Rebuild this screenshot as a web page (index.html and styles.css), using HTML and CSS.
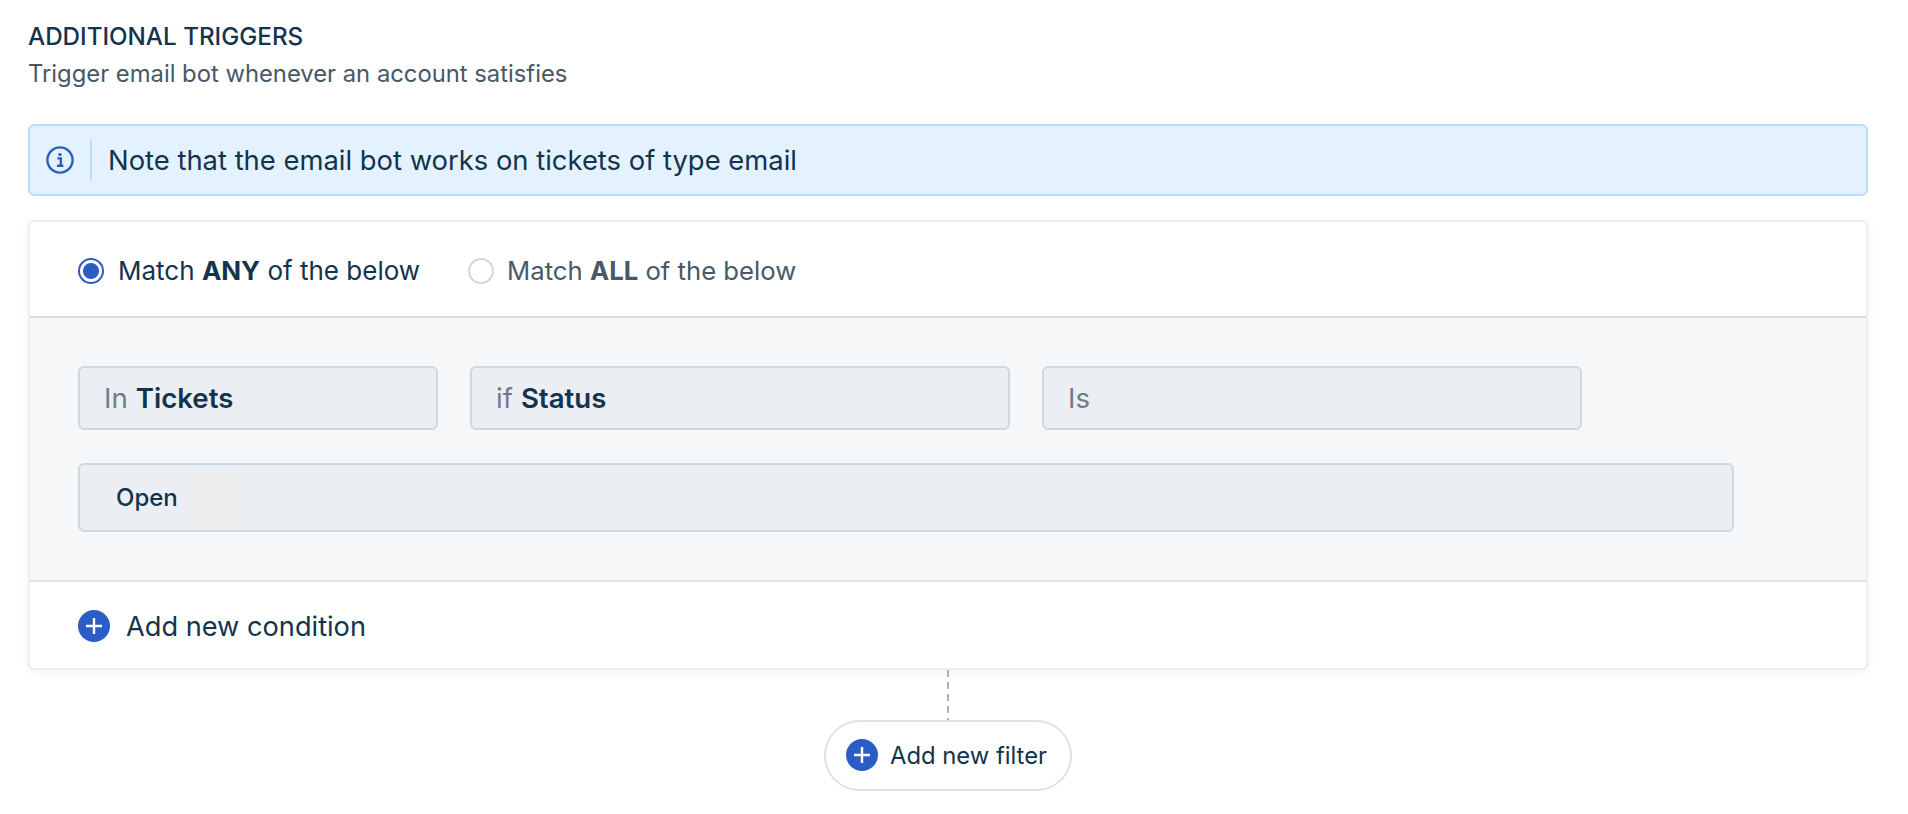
FILE: index.html
```html
<!DOCTYPE html>
<html lang="en">
<head>
<meta charset="utf-8">
<title>Additional triggers</title>
<link rel="stylesheet" href="styles.css">
</head>
<body>
<main class="page">
  <h1 class="title">ADDITIONAL TRIGGERS</h1>
  <p class="subtitle">Trigger email bot whenever an account satisfies</p>
  <div class="banner">
    <svg class="info-icon" viewBox="0 0 28 28" width="28" height="28" aria-hidden="true">
      <circle cx="14" cy="14" r="12.6" fill="none" stroke="#2c5cc5" stroke-width="2.4"/>
      <circle cx="14" cy="8.6" r="1.7" fill="#2c5cc5"/>
      <path d="M11.4 12.4h3.4v7.2M11 19.8h6.4" fill="none" stroke="#2c5cc5" stroke-width="2.4"/>
    </svg>
    <span class="banner-sep"></span>
    <span class="banner-text">Note that the email bot works on tickets of type email</span>
  </div>
  <section class="card">
    <div class="match-row">
      <label class="radio-option active"><span class="radio on"></span><span>Match <b>ANY</b> of the below</span></label>
      <label class="radio-option"><span class="radio"></span><span>Match <b>ALL</b> of the below</span></label>
    </div>
    <div class="conditions">
      <div class="select-row">
        <div class="select sel-a"><span class="pre">In</span> <b>Tickets</b></div>
        <div class="select sel-b"><span class="pre">if</span> <b>Status</b></div>
        <div class="select sel-b"><span class="pre">Is</span></div>
      </div>
      <div class="multi">
        <span class="tag">Open</span>
        <span class="tag-ghost"></span>
      </div>
    </div>
    <div class="add-row">
      <svg class="plus" viewBox="0 0 32 32" width="32" height="32" aria-hidden="true">
        <circle cx="16" cy="16" r="16" fill="#2c5cc5"/>
        <path d="M16 8v16M8 16h16" stroke="#fff" stroke-width="2.4" fill="none"/>
      </svg>
      <span>Add new condition</span>
    </div>
  </section>
  <div class="connector"></div>
  <div class="pill-wrap">
    <button class="pill" type="button">
      <svg class="plus" viewBox="0 0 32 32" width="32" height="32" aria-hidden="true">
        <circle cx="16" cy="16" r="16" fill="#2c5cc5"/>
        <path d="M16 8v16M8 16h16" stroke="#fff" stroke-width="2.4" fill="none"/>
      </svg>
      <span>Add new filter</span>
    </button>
  </div>
</main>
</body>
</html>
```
FILE: styles.css
```css
* { box-sizing: border-box; }
html, body { margin: 0; padding: 0; background: #fff; }
body { font-family: Inter, "Liberation Sans", sans-serif; color: #12344d; overflow: hidden; }
.page { width: 1908px; height: 814px; padding: 23px 40px 0 28px; }
.title { margin: 0; font-size: 24.2px; line-height: 28px; font-weight: 500; color: #12344d; }
.subtitle { margin: 9px 0 0; font-size: 23.8px; line-height: 28px; color: #475867; }
.banner { margin-top: 36px; height: 72px; display: flex; align-items: center; background: #e4f1fe; border: 2px solid #bbdcfe; border-radius: 6px; padding-left: 16px; }
.banner-sep { width: 2px; height: 42px; background: #bbdcfe; margin: 0 16px; }
.banner-text { font-size: 27.4px; line-height: 32px; color: #12344d; }
.card { margin-top: 24px; height: 450px; background: #fff; border: 2px solid #ebeff3; border-radius: 6px; box-shadow: 0 2px 8px rgba(24, 50, 71, .06); display: flex; flex-direction: column; }
.match-row { height: 94px; display: flex; align-items: center; gap: 48px; padding: 3px 0 0 48px; }
.radio-option { display: flex; align-items: center; gap: 13px; font-size: 25.7px; line-height: 32px; color: #475867; }
.radio-option.active { gap: 14px; font-size: 26px; color: #12344d; }
.radio-option b { font-weight: 700; }
.radio { width: 26px; height: 26px; border-radius: 50%; border: 2px solid #cfd7df; background: #fff; flex: none; }
.radio.on { border-color: #2c5cc5; background: radial-gradient(circle, #2c5cc5 0 7.5px, #fff 8.5px); }
.conditions { height: 266px; border-top: 2px solid #d6dce2; border-bottom: 2px solid #dde2e7; background: #f5f7f9; padding: 48px 48px 0; }
.select-row { display: flex; gap: 32px; }
.select { height: 64px; display: flex; align-items: center; gap: 8px; padding: 0 0 0 24px; font-size: 27.6px; background: #ebeff3; border: 2px solid #cfd7df; border-radius: 6px; }
.select b { font-weight: 600; }
.sel-a { width: 360px; }
.sel-b { width: 540px; }
.pre { color: #6f7c87; }
.multi { margin-top: 33px; width: 1656px; height: 69px; display: flex; align-items: center; padding-left: 36px; background: #ebeff3; border: 2px solid #cfd7df; border-radius: 6px; }
.tag { font-size: 24px; font-weight: 500; }
.tag-ghost { width: 49px; height: 50px; margin-left: 12px; background: #eeeeee; }
.add-row { flex: 1; display: flex; align-items: center; gap: 16px; padding: 2px 0 0 48px; font-size: 27.2px; }
.connector { width: 2px; height: 50px; margin-left: 919px; background: repeating-linear-gradient(to bottom, #a9b2bc 0 7px, transparent 7px 12px); }
.pill-wrap { display: flex; padding-left: 796px; }
.pill { width: 248px; height: 71px; display: flex; align-items: center; gap: 12px; padding: 0 0 1px 20px; background: #fff; border: 2px solid #dde2e7; border-radius: 36px; font: inherit; font-size: 23.8px; color: #12344d; }
```
